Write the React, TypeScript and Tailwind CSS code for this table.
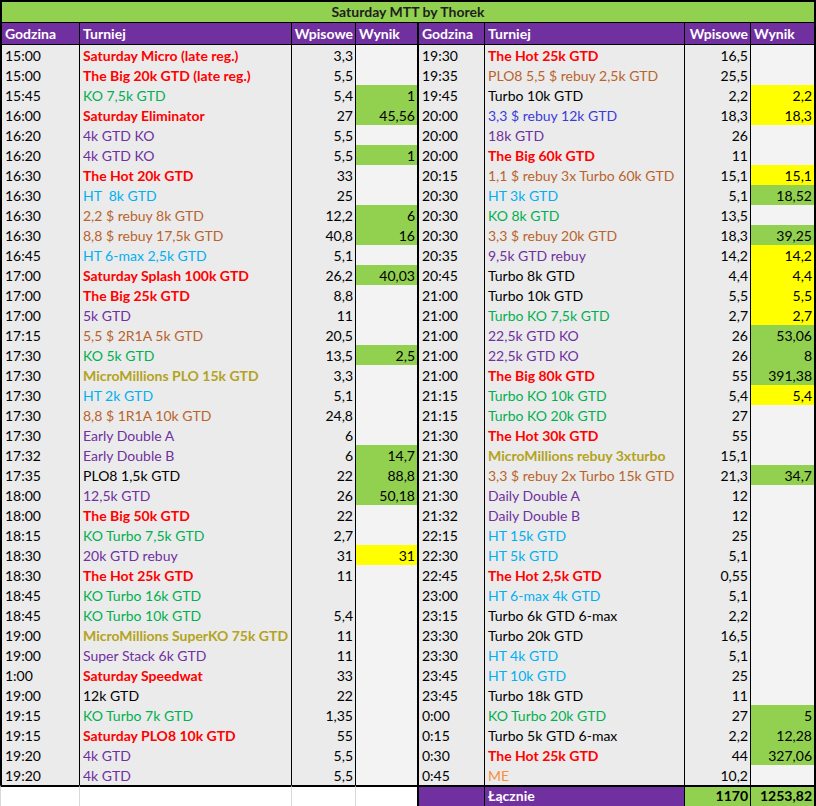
type Row = {
  time: string;
  name: string;
  color: string;
  fee: string;
  result?: string;
  hit?: 'green' | 'yellow';
};

const red = 'text-[#ff0000] font-bold';
const green = 'text-[#00b050]';
const purple = 'text-[#7030a0]';
const brown = 'text-[#b9632c]';
const sky = 'text-[#00b0f0]';
const olive = 'text-[#b3a320] font-bold';
const blue = 'text-[#3b3bd9]';
const orange = 'text-[#f7903f]';
const black = 'text-black';

const left: Row[] = [
  { time: '15:00', name: 'Saturday Micro (late reg.)', color: red, fee: '3,3' },
  { time: '15:00', name: 'The Big 20k GTD (late reg.)', color: red, fee: '5,5' },
  { time: '15:45', name: 'KO 7,5k GTD', color: green, fee: '5,4', result: '1', hit: 'green' },
  { time: '16:00', name: 'Saturday Eliminator', color: red, fee: '27', result: '45,56', hit: 'green' },
  { time: '16:20', name: '4k GTD KO', color: purple, fee: '5,5' },
  { time: '16:20', name: '4k GTD KO', color: purple, fee: '5,5', result: '1', hit: 'green' },
  { time: '16:30', name: 'The Hot 20k GTD', color: red, fee: '33' },
  { time: '16:30', name: 'HT  8k GTD', color: sky, fee: '25' },
  { time: '16:30', name: '2,2 $ rebuy 8k GTD', color: brown, fee: '12,2', result: '6', hit: 'green' },
  { time: '16:30', name: '8,8 $ rebuy 17,5k GTD', color: brown, fee: '40,8', result: '16', hit: 'green' },
  { time: '16:45', name: 'HT 6-max 2,5k GTD', color: sky, fee: '5,1' },
  { time: '17:00', name: 'Saturday Splash 100k GTD', color: red, fee: '26,2', result: '40,03', hit: 'green' },
  { time: '17:00', name: 'The Big 25k GTD', color: red, fee: '8,8' },
  { time: '17:00', name: '5k GTD', color: purple, fee: '11' },
  { time: '17:15', name: '5,5 $ 2R1A 5k GTD', color: brown, fee: '20,5' },
  { time: '17:30', name: 'KO 5k GTD', color: green, fee: '13,5', result: '2,5', hit: 'green' },
  { time: '17:30', name: 'MicroMillions PLO 15k GTD', color: olive, fee: '3,3' },
  { time: '17:30', name: 'HT 2k GTD', color: sky, fee: '5,1' },
  { time: '17:30', name: '8,8 $ 1R1A 10k GTD', color: brown, fee: '24,8' },
  { time: '17:30', name: 'Early Double A', color: purple, fee: '6' },
  { time: '17:32', name: 'Early Double B', color: purple, fee: '6', result: '14,7', hit: 'green' },
  { time: '17:35', name: 'PLO8 1,5k GTD', color: black, fee: '22', result: '88,8', hit: 'green' },
  { time: '18:00', name: '12,5k GTD', color: purple, fee: '26', result: '50,18', hit: 'green' },
  { time: '18:00', name: 'The Big 50k GTD', color: red, fee: '22' },
  { time: '18:15', name: 'KO Turbo 7,5k GTD', color: green, fee: '2,7' },
  { time: '18:30', name: '20k GTD rebuy', color: purple, fee: '31', result: '31', hit: 'yellow' },
  { time: '18:30', name: 'The Hot 25k GTD', color: red, fee: '11' },
  { time: '18:45', name: 'KO Turbo 16k GTD', color: green, fee: '' },
  { time: '18:45', name: 'KO Turbo 10k GTD', color: green, fee: '5,4' },
  { time: '19:00', name: 'MicroMillions SuperKO 75k GTD', color: olive, fee: '11' },
  { time: '19:00', name: 'Super Stack 6k GTD', color: purple, fee: '11' },
  { time: '1:00', name: 'Saturday Speedwat', color: red, fee: '33' },
  { time: '19:00', name: '12k GTD', color: black, fee: '22' },
  { time: '19:15', name: 'KO Turbo 7k GTD', color: green, fee: '1,35' },
  { time: '19:15', name: 'Saturday PLO8 10k GTD', color: red, fee: '55' },
  { time: '19:20', name: '4k GTD', color: purple, fee: '5,5' },
  { time: '19:20', name: '4k GTD', color: purple, fee: '5,5' },
];

const right: Row[] = [
  { time: '19:30', name: 'The Hot 25k GTD', color: red, fee: '16,5' },
  { time: '19:35', name: 'PLO8 5,5 $ rebuy 2,5k GTD', color: brown, fee: '25,5' },
  { time: '19:45', name: 'Turbo 10k GTD', color: black, fee: '2,2', result: '2,2', hit: 'yellow' },
  { time: '20:00', name: '3,3 $ rebuy 12k GTD', color: blue, fee: '18,3', result: '18,3', hit: 'yellow' },
  { time: '20:00', name: '18k GTD', color: purple, fee: '26' },
  { time: '20:00', name: 'The Big 60k GTD', color: red, fee: '11' },
  { time: '20:15', name: '1,1 $ rebuy 3x Turbo 60k GTD', color: brown, fee: '15,1', result: '15,1', hit: 'yellow' },
  { time: '20:30', name: 'HT 3k GTD', color: sky, fee: '5,1', result: '18,52', hit: 'green' },
  { time: '20:30', name: 'KO 8k GTD', color: green, fee: '13,5' },
  { time: '20:30', name: '3,3 $ rebuy 20k GTD', color: brown, fee: '18,3', result: '39,25', hit: 'green' },
  { time: '20:35', name: '9,5k GTD rebuy', color: purple, fee: '14,2', result: '14,2', hit: 'yellow' },
  { time: '20:45', name: 'Turbo 8k GTD', color: black, fee: '4,4', result: '4,4', hit: 'yellow' },
  { time: '21:00', name: 'Turbo 10k GTD', color: black, fee: '5,5', result: '5,5', hit: 'yellow' },
  { time: '21:00', name: 'Turbo KO 7,5k GTD', color: green, fee: '2,7', result: '2,7', hit: 'yellow' },
  { time: '21:00', name: '22,5k GTD KO', color: purple, fee: '26', result: '53,06', hit: 'green' },
  { time: '21:00', name: '22,5k GTD KO', color: purple, fee: '26', result: '8', hit: 'green' },
  { time: '21:00', name: 'The Big 80k GTD', color: red, fee: '55', result: '391,38', hit: 'green' },
  { time: '21:15', name: 'Turbo KO 10k GTD', color: green, fee: '5,4', result: '5,4', hit: 'yellow' },
  { time: '21:15', name: 'Turbo KO 20k GTD', color: green, fee: '27' },
  { time: '21:30', name: 'The Hot 30k GTD', color: red, fee: '55' },
  { time: '21:30', name: 'MicroMillions rebuy 3xturbo', color: olive, fee: '15,1' },
  { time: '21:30', name: '3,3 $ rebuy 2x Turbo 15k GTD', color: brown, fee: '21,3', result: '34,7', hit: 'green' },
  { time: '21:30', name: 'Daily Double A', color: purple, fee: '12' },
  { time: '21:32', name: 'Daily Double B', color: purple, fee: '12' },
  { time: '22:15', name: 'HT 15k GTD', color: sky, fee: '25' },
  { time: '22:30', name: 'HT 5k GTD', color: sky, fee: '5,1' },
  { time: '22:45', name: 'The Hot 2,5k GTD', color: red, fee: '0,55' },
  { time: '23:00', name: 'HT 6-max 4k GTD', color: sky, fee: '5,1' },
  { time: '23:15', name: 'Turbo 6k GTD 6-max', color: black, fee: '2,2' },
  { time: '23:30', name: 'Turbo 20k GTD', color: black, fee: '16,5' },
  { time: '23:30', name: 'HT 4k GTD', color: sky, fee: '5,1' },
  { time: '23:45', name: 'HT 10k GTD', color: sky, fee: '25' },
  { time: '23:45', name: 'Turbo 18k GTD', color: black, fee: '11' },
  { time: '0:00', name: 'KO Turbo 20k GTD', color: green, fee: '27', result: '5', hit: 'green' },
  { time: '0:15', name: 'Turbo 5k GTD 6-max', color: black, fee: '2,2', result: '12,28', hit: 'green' },
  { time: '0:30', name: 'The Hot 25k GTD', color: red, fee: '44', result: '327,06', hit: 'green' },
  { time: '0:45', name: 'ME', color: orange, fee: '10,2' },
];

// no background here: each cell sets its own, so the result colours win
const cell = 'h-[20px] leading-[20px] pt-[1px] whitespace-pre overflow-hidden border-r border-black';

const resultBg = (r: Row) =>
  r.hit === 'green' ? 'bg-[#92d050]' : r.hit === 'yellow' ? 'bg-[#ffff00]' : 'bg-[#f3f3f3]';

const Half = ({ row, first }: { row: Row; first?: boolean }) => (
  <>
    <div className={`${cell} bg-[#ebebeb] pl-[3px] ${first ? 'border-l-2' : ''}`}>{row.time}</div>
    <div className={`${cell} bg-[#ebebeb] pl-[3px] ${row.color}`}>{row.name}</div>
    <div className={`${cell} bg-[#ebebeb] pr-[2px] text-right`}>{row.fee}</div>
    <div className={`${cell} pr-[2px] text-right border-r-2 ${resultBg(row)}`}>{row.result}</div>
  </>
);

const head = 'h-[22px] leading-[21px] bg-[#7030a0] text-white font-bold border-b border-r border-black';

export default function App() {
  return (
    <div className="w-[816px] h-[806px] overflow-hidden bg-white font-['Lato','Liberation_Sans',sans-serif] text-[14px] text-black">
      <div className="grid grid-cols-[80px_212px_64px_63px_66px_200px_66px_65px]">
        <div className="col-span-8 h-[23px] leading-[20px] bg-[#92d050] border-2 border-b border-black text-center font-bold text-[#1e1e1e]">
          Saturday MTT by Thorek
        </div>

        <div className={`${head} border-l-2 pl-[3px]`}>Godzina</div>
        <div className={`${head} pl-[3px]`}>Turniej</div>
        <div className={`${head} text-right pr-[2px]`}>Wpisowe</div>
        <div className={`${head} border-r-2 pl-[3px]`}>Wynik</div>
        <div className={`${head} pl-[3px]`}>Godzina</div>
        <div className={`${head} pl-[3px]`}>Turniej</div>
        <div className={`${head} text-right pr-[2px]`}>Wpisowe</div>
        <div className={`${head} border-r-2 pl-[3px]`}>Wynik</div>

        {left.map((row, i) => (
          <div key={i} className="contents">
            <Half row={row} first />
            <Half row={right[i]} />
          </div>
        ))}

        <div className="h-[21px] border-t-2 border-t-black border-l border-r border-[#d9d9d9]" />
        <div className="h-[21px] border-t-2 border-t-black border-r border-r-[#d9d9d9]" />
        <div className="h-[21px] border-t-2 border-t-black border-r border-r-[#d9d9d9]" />
        <div className="h-[21px] border-t-2 border-t-black border-r-2 border-r-black" />
        <div className="h-[21px] border-t-2 border-r border-black bg-[#7030a0]" />
        <div className="h-[21px] leading-[18px] border-t-2 border-r border-black bg-[#7030a0] text-white font-bold pl-[3px]">
          Łącznie
        </div>
        <div className="h-[21px] leading-[18px] border-t-2 border-r border-black bg-[#92d050] font-bold text-right pr-[2px]">
          1170
        </div>
        <div className="h-[21px] leading-[18px] border-t-2 border-r-2 border-black bg-[#92d050] font-bold text-right pr-[2px]">
          1253,82
        </div>
      </div>
    </div>
  );
}
